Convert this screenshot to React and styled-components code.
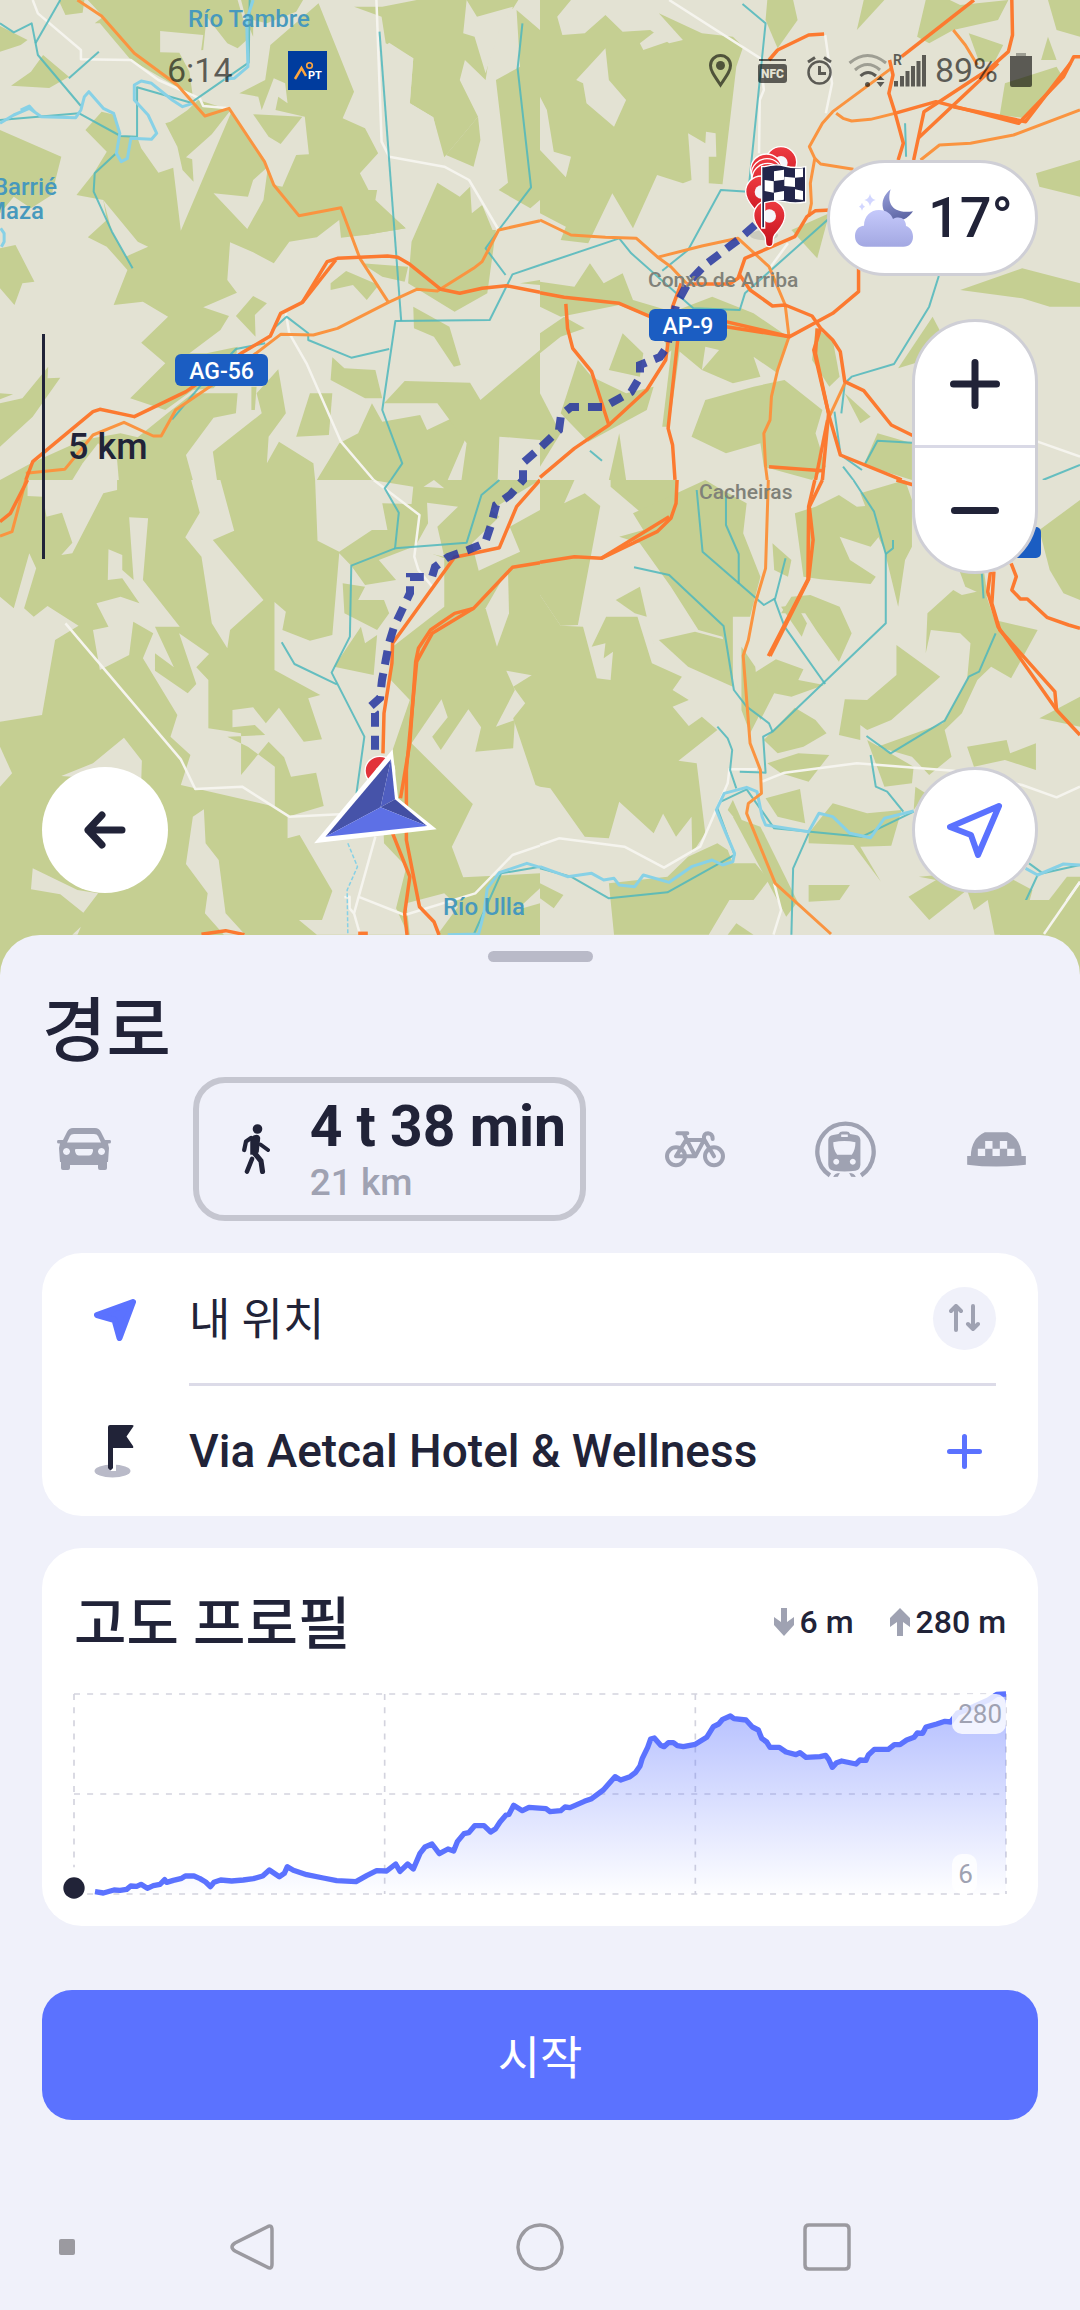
import React from 'react';
import styled, { createGlobalStyle, css } from 'styled-components';

const INK = '#212338';
const MUTED = '#9fa2b2';
const ACCENT = '#5b72ff';
const SURFACE = '#f0f1fa';

const GlobalStyle = createGlobalStyle`
  * {
    box-sizing: border-box;
  }

  body {
    margin: 0;
    background: ${SURFACE};
    color: ${INK};
    font-family: Roboto, 'Noto Sans CJK KR', sans-serif;
  }

  button {
    padding: 0;
    border: none;
    background: none;
    color: inherit;
    font: inherit;
    cursor: pointer;
  }

  svg {
    display: block;
  }
`;

const Screen = styled.div`
  display: flex;
  flex-direction: column;
  min-height: 100vh;
`;

/* ---------- map ---------- */

const MapArea = styled.section`
  position: relative;
  display: flex;
  flex: 1 0 auto;
  flex-direction: column;
  min-height: 960px;
  overflow: hidden;
`;

const MapCanvas = styled.svg`
  position: absolute;
  inset: 0;
  width: 100%;
  height: 100%;
`;

const StatusBar = styled.header`
  position: relative;
  display: flex;
  align-items: center;
  justify-content: space-between;
  height: 140px;
  padding: 0 48px 0 167px;
  font-size: 34px;
  line-height: 40px;
  color: rgba(0, 0, 0, 0.6);
`;

const StatusGroup = styled.div`
  display: flex;
  align-items: center;
  gap: ${({ $gap }) => $gap}px;
`;

const AppBadge = styled.svg`
  width: 39px;
  height: 39px;
  background: #003c9e;
`;

const MapOverlay = styled.div`
  position: relative;
  display: flex;
  flex: 1;
  justify-content: space-between;
  padding: 20px 42px 82px;
`;

const OverlayColumn = styled.div`
  display: flex;
  flex-direction: column;
  align-items: ${({ $align }) => $align};
  justify-content: space-between;
`;

const Controls = styled.div`
  display: flex;
  flex-direction: column;
  align-items: flex-end;
  gap: 43px;
`;

const WeatherPill = styled.button`
  display: flex;
  align-items: center;
  gap: 14px;
  height: 116px;
  padding: 0 22px 0 24px;
  border: 3px solid #cfcfd6;
  border-radius: 58px;
  background: #fff;
  font-size: 56px;
  font-weight: 500;
  line-height: 64px;
`;

const ZoomControl = styled.div`
  width: 126px;
  border: 3px solid #cfcfd6;
  border-radius: 63px;
  background: #fff;
`;

const ZoomButton = styled.button`
  display: flex;
  align-items: center;
  justify-content: center;
  width: 100%;
  height: 123px;

  & + & {
    height: 126px;
    border-top: 3px solid #d9d9e6;
  }
`;

const RoundButton = styled.button`
  display: flex;
  align-items: center;
  justify-content: center;
  width: 126px;
  height: 126px;
  border-radius: 50%;
  background: #fff;
  ${({ $outlined }) =>
    $outlined &&
    css`
      border: 3px solid #cfcfd6;
    `}
`;

const ScaleBar = styled.div`
  display: flex;
  align-items: center;
  height: 225px;
  margin-top: 174px;
  padding-left: 23px;
  border-left: 3px solid ${INK};
  font-size: 36px;
  font-weight: 500;
`;

/* ---------- sheet ---------- */

const Sheet = styled.main`
  position: relative;
  display: flex;
  flex-direction: column;
  margin-top: -40px;
  padding: 16px 42px 0;
  border-radius: 40px 40px 0 0;
  background: ${SURFACE};
`;

const Handle = styled.div`
  width: 105px;
  height: 11px;
  margin: 0 auto;
  border-radius: 6px;
  background: #b9bac8;
`;

const Title = styled.h1`
  margin: 25px 0 0;
  font-size: 70px;
  font-weight: 500;
  line-height: 90px;
`;

const ModeRow = styled.div`
  display: flex;
  align-items: center;
  justify-content: space-between;
`;

const ModeButton = styled.button`
  display: flex;
  align-items: center;
  justify-content: center;
  width: 84px;
  height: 84px;
  color: ${MUTED};
`;

const ActiveMode = styled.button`
  display: flex;
  align-items: center;
  gap: 40px;
  width: 393px;
  height: 144px;
  padding-left: 43px;
  border: 6px solid #c5c6d0;
  border-radius: 32px;
  text-align: left;
  white-space: nowrap;
`;

const ModeText = styled.span`
  padding-top: 4px;
`;

const Duration = styled.span`
  display: block;
  font-size: 57px;
  font-weight: 700;
  line-height: 64px;
`;

const Distance = styled.span`
  display: block;
  font-size: 37px;
  font-weight: 500;
  line-height: 48px;
  color: ${MUTED};
`;

const Card = styled.section`
  margin-top: 32px;
  padding: ${({ $padding }) => $padding};
  border-radius: 40px;
  background: #fff;
`;

const Waypoint = styled.div`
  display: grid;
  grid-template-columns: 95px 1fr;
  align-items: center;
`;

const WaypointBody = styled.div`
  display: flex;
  align-items: center;
  justify-content: space-between;
  height: ${({ $divided }) => ($divided ? 133 : 130)}px;
  border-bottom: ${({ $divided }) => ($divided ? '3px solid #dcdbe8' : 'none')};
`;

const WaypointName = styled.span`
  padding-top: ${({ $strong }) => ($strong ? 0 : 6)}px;
  font-size: ${({ $strong }) => ($strong ? 46 : 45)}px;
  font-weight: ${({ $strong }) => ($strong ? 500 : 400)};
  line-height: 56px;
`;

const RowAction = styled.button`
  display: flex;
  align-items: center;
  justify-content: center;
  width: 63px;
  height: 63px;
  border-radius: 50%;
  background: ${({ $filled }) => ($filled ? SURFACE : 'transparent')};
  color: ${({ $filled }) => ($filled ? MUTED : ACCENT)};
`;

const ProfileHeader = styled.div`
  display: flex;
  align-items: center;
  justify-content: space-between;
  height: 84px;
  margin-bottom: 30px;
`;

const ProfileTitle = styled.h2`
  margin: 0;
  padding-top: 6px;
  font-size: 57px;
  font-weight: 500;
  line-height: 78px;
`;

const Stats = styled.div`
  display: flex;
  gap: 36px;
`;

const Stat = styled.span`
  display: flex;
  align-items: center;
  gap: 6px;
  font-size: 32px;
  font-weight: 500;
  line-height: 40px;
`;

const ChartBox = styled.div`
  position: relative;
`;

const ChartSvg = styled.svg`
  width: 100%;
  height: auto;
  overflow: visible;
`;

const ChartLabels = styled.div`
  position: absolute;
  inset: 0 0 0 auto;
  display: flex;
  flex-direction: column;
  align-items: flex-start;
  justify-content: space-between;
`;

const ChartLabel = styled.span`
  padding: 0 4px 0 6px;
  border-radius: 10px;
  background: rgba(255, 255, 255, 0.8);
  font-size: 26px;
  line-height: 40px;
  color: ${MUTED};
`;

const StartButton = styled.button`
  height: 130px;
  margin-top: 64px;
  padding-top: 6px;
  border-radius: 30px;
  background: ${ACCENT};
  color: #fff;
  font-size: 46px;
  line-height: 56px;
`;

const NavBar = styled.nav`
  display: grid;
  grid-template-columns: 109px 1fr 1fr 1fr 109px;
  height: 190px;
  padding-top: 64px;
  background: ${SURFACE};
`;

const NavButton = styled.button`
  display: flex;
  align-items: center;
  justify-content: ${({ $end }) => ($end ? 'flex-end' : 'center')};
  height: 126px;
  padding-right: ${({ $end }) => ($end ? 34 : 0)}px;
`;

/* ---------- map data: four quadrants, each 1568 x 1440 units ---------- */

const LAND = '#e3e2d3';
const FOREST = '#c5cf92';

const quadrants = [
  {
    x: 0,
    y: 0,
    base: LAND,
    patches: [
      [FOREST, '170,0 245,0 240,38 190,45'],
      [FOREST, '0,78 80,120 60,135 0,155'],
      [FOREST, '125,165 200,230 143,264 32,257 90,215'],
      [FOREST, '255,0 690,0 722,115 690,145 660,130 600,50 590,150 520,157 550,215 560,290 480,240 380,180 290,70 275,70 300,50'],
      [LAND, '465,93 590,105 583,160 465,157'],
      [FOREST, '700,0 740,0 880,0 860,35 775,70 735,60 735,110 715,60'],
      [FOREST, '248,390 295,335 335,345 350,408 398,410 410,445 460,518 503,503 525,692 672,335 768,485 795,555 868,647 990,623 1022,572 1030,645 1085,600 1178,685 1060,705 990,713 985,660 920,712 840,725 795,790 735,757 668,727 660,840 688,878 590,922 665,948 640,990 550,1060 600,1060 690,1040 680,1100 620,1165 560,1170 480,1230 378,1195 480,1090 410,1028 488,950 415,905 330,915 370,810 310,740 255,712 310,660 300,600 222,585 272,520 310,455'],
      [FOREST, '480,370 495,365 545,330 575,300 670,330 615,403 540,472 558,478 562,545 530,510 515,440'],
      [LAND, '620,580 720,590 735,540 778,500 765,600 718,687'],
      [LAND, '365,770 430,740 400,725 300,600 325,695'],
      [FOREST, '785,135 880,50 925,10 1028,275 995,355 1060,385 1098,460 1045,520 1070,570 1095,570 1090,600 1178,685 1060,705 985,640 870,647 795,555 820,560 860,465 897,463 885,350 800,330 808,290 835,310 828,250 795,235 760,330 750,290 695,280 770,240'],
      [FOREST, '735,343 878,350 815,432 780,410'],
      [FOREST, '0,390 178,470 150,585 90,625 40,590 0,640'],
      [FOREST, '0,745 45,735 100,845 65,850 42,915 0,865'],
      [FOREST, '0,1210 65,1195 140,1100 138,1135 175,1133 95,1250 0,1340'],
      [FOREST, '0,1180 38,1183 0,1198'],
      [FOREST, '480,1245 560,1180 690,1180 685,1240 620,1253 540,1365 560,1440 0,1440 90,1390 240,1320 350,1300 400,1312'],
      [LAND, '240,1390 285,1330 340,1380 345,1440 210,1440'],
      [FOREST, '1028,20 1108,50 1120,130 1200,175 1190,310 1258,352 1290,472 1388,350 1335,240 1350,180 1410,240 1440,40 1490,25 1505,0 1210,0 1110,20'],
      [LAND, '1030,50 1092,60 1100,400 1130,470 1290,500 1258,352 1190,310 1200,175 1130,128 1110,145 1095,50'],
      [FOREST, '1500,30 1568,90 1568,600 1540,625 1448,570 1475,548 1440,240 1510,200'],
      [LAND, '1355,0 1385,50 1490,20 1450,90 1410,220 1378,110 1345,100'],
      [FOREST, '1295,465 1388,350 1395,420 1375,500'],
      [FOREST, '1270,548 1335,590 1365,560 1370,640 1400,615 1430,690 1440,690 1415,880 1320,935 1185,850 1195,725'],
      [FOREST, '1050,790 1185,800 1175,845 1110,830'],
      [FOREST, '960,850 1005,813 1100,855 1065,900 1025,855 960,870'],
      [FOREST, '1200,920 1305,980 1338,1095 1318,1100 1260,1010 1202,985'],
      [FOREST, '735,888 775,910 740,945 742,1010 685,948'],
      [FOREST, '745,1180 808,1108 830,1240 780,1310 775,1390 810,1325 910,1390 915,1440 630,1440 618,1355 760,1240'],
      [FOREST, '730,1160 745,1160 740,1230 730,1230'],
      [FOREST, '900,1180 965,1180 955,1305 860,1310'],
      [FOREST, '965,1072 1000,1105 1090,1110 1110,1195 1060,1195 960,1140'],
      [FOREST, '1080,1210 1110,1265 1220,1245 1240,1290 1358,1232 1350,1320 1300,1440 920,1440 985,1330 1040,1300'],
      [FOREST, '1175,1143 1365,1148 1395,1200 1510,1100 1568,1050 1568,1320 1450,1310 1445,1440 1340,1440 1355,1330 1270,1210 1115,1210'],
      [FOREST, '1510,850 1568,840 1568,855'],
    ],
    white: [
      '95,0 110,40 235,150 235,178 380,180 460,240 580,295 590,318 665,325',
      '1093,0 1108,425 1130,470 1290,500 1362,540 1448,690',
      '830,940 840,1000 890,1090 990,1325 1085,1440',
    ],
    teal: [
      '0,70 40,97 92,70 110,165 235,318',
      '175,0 103,130',
      '287,155 200,235',
      '0,360 230,340 350,408 398,410 398,262 555,308 722,188 725,0',
      '335,462 275,520 272,575 325,695 385,805',
      '1102,95 1165,963',
      '1517,70 1503,205 1542,562 1448,690 1410,745 1468,825',
      '1568,795 1488,823 1422,960 1148,963 1110,1230 1168,1390 1135,1440',
      '790,990 832,950 895,1000 895,1020 1020,1073 1130,1047',
      '770,1030 685,1047 580,1160 500,1258',
    ],
    river: [
      '0,370 40,345 85,325 120,350 220,353 235,330 245,290 258,275 300,325 330,340 348,400 338,460 352,485 370,475 380,415 440,418 455,400 430,345 390,300 390,255 410,243 440,250 500,300 530,320 560,310',
      '735,0 716,60 720,200 680,235 650,238',
      '60,330 85,318 100,335',
      '2,685 12,700 12,725 4,740',
    ],
    minor: [
      '225,0 295,48 390,160 515,255 595,348 665,325 768,485 795,555 868,647 990,623 1045,775 1128,907',
      '75,1420 188,1408 270,1305 360,1267 445,1308 468,1308 510,1230 680,1110 815,1003 910,1005 980,985 1128,907 1210,868 1270,873 1375,805 1400,785 1448,690 1568,662',
    ],
    major: [
      '75,1440 95,1385 270,1235 290,1228 390,1250 540,1175 700,1060 785,1008 815,940 878,907 950,785 980,775 1125,768 1155,772 1190,793 1280,868 1335,880 1400,865 1470,857 1568,877',
      '878,907 975,780',
    ],
  },
  {
    x: 540,
    y: 0,
    base: LAND,
    patches: [
      [FOREST, '0,0 90,0 50,50 65,105 130,100 190,45 240,95 320,90 375,130 415,120 345,40 470,100 560,110 590,140 570,200 530,553 490,550 490,470 512,470 510,400 482,395 480,430 430,400 440,540 415,550 340,525 270,685 210,580 140,730 60,720 75,680 0,640 0,450 75,532 90,470 40,455 20,330 0,290'],
      [LAND, '105,240 190,145 200,240 250,300 215,380 135,310 125,250'],
      [LAND, '290,130 340,90 370,125 300,150'],
      [FOREST, '660,0 735,0 748,60 690,145 655,60'],
      [FOREST, '940,0 1000,0 920,90'],
      [FOREST, '1120,0 1190,0 1220,15 1360,0 1330,60 1200,90 1130,130 1095,110'],
      [FOREST, '1245,100 1345,135 1320,185 1275,185'],
      [FOREST, '1475,0 1568,0 1568,110 1500,90'],
      [FOREST, '1350,250 1500,200 1520,235 1410,355 1335,345'],
      [FOREST, '1475,110 1500,180 1455,180'],
      [FOREST, '1440,520 1568,480 1568,590 1450,560'],
      [FOREST, '1220,870 1400,805 1568,850 1568,920 1480,920 1400,895'],
      [FOREST, '1140,950 1165,1000 1150,1070 1040,1105'],
      [FOREST, '730,690 840,640 805,775'],
      [FOREST, '0,845 100,860 145,790 185,850 240,820 270,900 400,940 440,1010 370,1060 350,960 300,945 230,915 60,950 0,920'],
      [FOREST, '0,1000 70,950 130,985 60,1010 0,1060'],
      [FOREST, '240,1000 300,1060 290,1130 200,1110'],
      [FOREST, '110,1080 150,1130 250,1180 330,1160 310,1230 140,1325 60,1240'],
      [FOREST, '400,930 500,890 620,940 720,1010 690,1120 620,1070 640,1130 560,1150 470,1110 520,1050 480,1040 470,1110 400,1050'],
      [FOREST, '385,1020 410,1020 375,1280 355,1280'],
      [FOREST, '480,1200 620,1160 710,1140 820,1230 800,1300 830,1400 790,1440 650,1400 640,1330 540,1360 440,1310'],
      [FOREST, '980,1300 1080,1330 1080,1440 940,1395'],
      [FOREST, '885,1180 960,1250 930,1270'],
      [FOREST, '800,985 850,1020 870,1130 840,1160 790,1080'],
      [FOREST, '0,1180 60,1300 0,1400'],
      [FOREST, '230,1300 250,1440 200,1440'],
    ],
    white: [
      '375,0 640,175 650,270 638,300 636,460',
      '828,105 848,250 830,340',
      '720,730 670,800',
      '1445,1325 1568,1370',
    ],
    teal: [
      '588,12 655,70 605,575 525,570 430,750 355,812',
      '0,795 230,715 265,760 445,925 580,930 595,880 840,655',
      '1158,828 1130,920 1028,1092 905,1130 885,1150 875,1240',
      '855,1235 873,1365 935,1410',
      '1080,1328 980,1322 942,1395',
      '1568,1395 1460,1440',
      '880,1400 910,1440',
      '1060,370 1063,470',
      '145,1352 180,1382',
    ],
    river: [],
    minor: [
      '0,660 90,705 190,712 280,715 340,770 380,800 425,850',
      '340,772 470,738 575,715 665,800 712,915 723,1010 690,1110 672,1190 668,1260 650,1300 655,1400 660,1440',
      '1020,205 850,335 820,370 782,440 798,475 785,550 788,610 780,650',
      '860,340 880,355 905,363 960,358 1030,340',
      '1105,480 1160,435 1250,430 1375,405 1568,330',
      '798,475 815,492 910,508',
      '1200,90 1235,135 1270,195',
      '885,1150 840,1250',
    ],
    major: [
      '0,878 70,892 230,910 320,950 540,965 725,1010 850,940 925,875 925,800',
      '540,980 725,1010',
      '580,825 610,870 675,918 712,915 790,948 815,985 850,1020 872,1055 885,1145 940,1172 1020,1275 1085,1308',
      '815,985 795,1050 840,1250 872,1365 1050,1440',
      '805,985 800,1060 838,1240 820,1440',
      '835,1260 800,1440',
      '425,852 550,852 575,835 595,775 740,710 775,650 800,632 845,630',
      '410,850 385,920 365,1080 310,1170 200,1275 100,1345 0,1432',
      '400,1020 372,1285 385,1335 392,1440',
      '75,912 80,985 95,1045 150,1115 200,1275',
      '1260,0 1050,170',
      '1370,0 1372,105 1360,155 1300,210 1115,335 1085,480',
      '1330,190 1098,415',
      '1015,180 1025,225 1013,280 1030,335 1055,430 1040,480',
      '1030,340 1150,305 1390,370 1520,230 1550,170 1568,170',
      '1200,320 1410,365 1540,190',
      '665,180 690,150 780,105 825,102',
      '665,1400 820,1412',
    ],
  },
  {
    x: 0,
    y: 480,
    base: FOREST,
    patches: [
      [LAND, '80,0 340,0 340,30 300,40 210,220 178,225 210,188 180,98 135,110 125,50 80,48'],
      [LAND, '555,0 640,0 680,152 618,180 765,360 668,450 660,505 615,430 585,230 538,172 580,98'],
      [LAND, '915,0 1080,0 1200,20 1195,72 1110,70 1125,150 1080,150 985,215 922,182'],
      [LAND, '1230,20 1260,0 1290,25'],
      [LAND, '315,208 355,225 355,270 388,300 375,112 430,115 415,300 522,440 450,440 505,562 450,520 450,572 545,640 570,612 520,460 607,522 570,562 605,600 605,745 700,760 700,885 780,785 825,832 845,890 918,878 940,978 835,1010 835,1075 870,1065 965,1233 935,1320 868,1320 920,1364 1185,1364 1150,1285 1180,1160 1115,1090 1110,940 1140,810 1190,660 1130,595 1140,500 1290,380 1290,235 1200,200 1100,240 1150,300 1060,315 1020,257 985,220 965,465 900,482 820,450 830,395 797,366 797,570 930,645 895,655 935,778 882,785 810,683 772,730 735,682 675,690 675,742 740,735 770,765 660,770 720,800 798,860 798,980 525,915 553,825 495,770 515,705 415,535 445,460 387,425 375,525 290,570 270,450 315,440 280,370 350,350 405,370 355,295 313,300'],
      [FOREST, '995,310 1060,320 1040,360 1115,360 1130,400 1095,450 1000,400'],
      [FOREST, '1048,440 1060,490 1095,465 1085,585 970,560'],
      [LAND, '0,350 40,385 85,220 105,265 70,385 98,410 138,378 228,437 160,480 122,705 0,725'],
      [LAND, '178,888 270,850 360,773 412,842 410,905'],
      [LAND, '95,1165 225,1230 285,1240 242,1298 175,1243 90,1228'],
      [LAND, '560,1010 592,988 597,1090 635,1140 655,1300 712,1364 650,1364 595,1300 603,1240 540,1152'],
      [LAND, '1195,790 1282,658 1300,712 1255,770 1280,810 1360,688 1397,742 1380,815 1490,805 1495,720 1440,740 1495,630 1470,572 1568,590 1568,1180 1345,1192 1312,1100 1373,972'],
      [FOREST, '1490,620 1568,570 1568,920 1555,915 1490,715 1525,670'],
      [LAND, '1240,68 1330,80 1270,140 1290,230 1200,210 1243,130'],
      [LAND, '1370,190 1450,110 1425,90 1568,0 1568,90 1480,140 1510,215 1390,272'],
      [LAND, '1410,385 1475,268 1478,400 1443,500'],
      [LAND, '0,800 35,880 0,920'],
      [LAND, '1180,1270 1290,1240 1330,1280 1270,1364 1190,1364'],
      [LAND, '1500,1290 1568,1225 1568,1270'],
      [LAND, '210,1364 235,1340 225,1364'],
    ],
    white: [
      '190,430 525,838 567,927 703,920 840,1010 1000,1002',
      '1085,0 1218,105 1203,230 1215,270 1255,320',
      '1090,1070 1028,1300 1045,1362',
      '1000,1252 1015,1250 1015,1285 1028,1300',
      '1040,1250 1175,1305 1380,1240 1488,1125 1568,1097',
    ],
    teal: [
      '1135,0 1117,25 1158,98 1147,205 1355,188 1398,45 1450,0',
      '1147,205 1020,257 1016,470 963,578 1058,770 1035,940',
      '818,487 855,552 978,613',
      '1568,1160 1455,1180 1375,1365',
    ],
    river: [
      '1568,1162 1530,1150 1450,1178 1415,1225 1405,1300 1390,1362 1300,1364',
    ],
    stream: ['1010,1090 1038,1160 1008,1230 1010,1362'],
    minor: ['75,0 35,155 0,168'],
    major: [
      '1568,248 1488,262 1375,385 1320,400 1250,450 1215,505 1207,545 1190,790 1163,955',
      '1375,385 1255,460 1210,545 1180,870 1180,1080 1218,1280 1260,1325 1275,1365',
      '1140,1060 1190,1190 1175,1300 1182,1365',
      '1568,0 1500,80 1450,203 1320,232 1140,490 1138,550 1115,700 1112,820',
      '80,0 30,100 0,125',
      '585,1363 655,1352 710,1364',
      '1040,1360 1068,1360',
    ],
  },
  {
    x: 540,
    y: 480,
    base: LAND,
    patches: [
      [FOREST, '0,0 100,0 70,70 130,40 175,78 110,435 60,437 0,345'],
      [FOREST, '205,0 400,0 385,95 290,95 205,20'],
      [FOREST, '230,170 300,150 270,100 480,0 520,25 600,70 590,160 640,290 610,410 560,410 560,600 530,470 460,450 380,320 290,190'],
      [FOREST, '220,360 290,320 310,410 275,400'],
      [FOREST, '345,480 450,455 540,480 560,620 430,560'],
      [FOREST, '0,345 60,437 125,440 165,595 205,600 212,515 185,535 190,490 150,500 192,410 283,410 325,550 412,590 385,630 432,660 385,680 432,738 470,710 515,750 402,842 455,850 480,1060 442,1120 440,1010 395,1070 330,950 358,1000 330,1060 230,965 200,1075 130,1070 30,925 0,920'],
      [LAND, '320,460 310,440 335,500'],
      [FOREST, '740,100 800,80 868,45 920,80 1037,70 1000,150 960,200 870,170 900,240 975,290 960,312 815,298 765,290'],
      [FOREST, '930,40 1060,0 1080,60 1080,200 1060,240 1040,380 1000,210 960,120'],
      [FOREST, '675,190 730,240 720,290 680,270'],
      [FOREST, '730,350 785,345 870,380 905,460 868,545 805,455 770,400 700,400'],
      [FOREST, '700,380 745,375 775,430 760,470'],
      [FOREST, '1125,400 1200,330 1225,345 1290,330 1320,420 1445,450 1368,595 1310,560 1270,600 1225,700 1175,750 1195,830 1130,885 1080,830 980,800 1170,730 1240,600 1250,490 1220,460 1135,450 1120,520'],
      [FOREST, '1035,495 1162,590 1020,720 950,750 930,735 930,780 868,765 885,658 950,660 1035,585'],
      [FOREST, '590,600 685,538 765,568 750,600 825,615 730,650 680,640 640,720'],
      [FOREST, '585,500 625,560 640,700 610,760 585,690'],
      [FOREST, '650,780 740,683 800,720 832,760 765,800 690,820'],
      [FOREST, '660,850 750,820 840,825 780,905 700,880'],
      [FOREST, '655,955 755,927 770,1030 690,1010'],
      [FOREST, '850,970 950,1000 1050,990 1020,1097 930,1100 990,1205 910,1095 780,1090 780,1060'],
      [FOREST, '640,1040 748,1265 715,1310 560,1010'],
      [FOREST, '950,780 1085,860 1080,910 1000,920'],
      [FOREST, '1090,920 1120,940 1085,990'],
      [FOREST, '780,1215 900,1215 870,1260 780,1265'],
      [FOREST, '1070,1250 1150,1200 1100,1190 1320,1170 1430,1230 1395,1364 1320,1364 1300,1260 1260,1290 1240,1230 1130,1320'],
      [FOREST, '1400,1364 1530,1190 1568,1190 1568,1364'],
      [FOREST, '1240,800 1355,780 1365,820 1440,790 1440,870 1350,840 1260,860'],
      [FOREST, '1450,150 1568,60 1568,360 1520,340 1480,270'],
      [FOREST, '1450,715 1568,650 1568,740'],
      [FOREST, '1210,250 1290,280 1300,350 1235,320'],
      [FOREST, '200,1210 370,1190 430,1130 515,1090 545,1110 560,1150 625,1150 665,1200 620,1260 550,1260 490,1364 215,1364'],
      [FOREST, '0,1210 68,1245 40,1285 0,1255'],
      [FOREST, '560,960 605,1065 545,990'],
      [FOREST, '545,1364 570,1330 620,1364'],
    ],
    white: [
      '0,1095 55,1075 245,1100 360,1163 465,1100 545,910 550,868 630,868',
      '645,905 710,878 920,850 1200,872 1400,915 1500,952 1568,920',
      '680,1210 700,1290 678,1364',
      '1460,1364 1568,1205',
    ],
    teal: [
      '455,30 472,215 650,375 683,355 713,235',
      '540,45 540,135 577,222 577,312',
      '680,355 710,440 828,612',
      '910,0 970,95 1004,222 1004,430 675,755 648,770 655,878 580,875',
      '1004,222 1025,205 1025,180',
      '273,262 375,285 533,438 563,630 600,680 665,730 675,755',
      '515,740 545,775 558,810 552,870 570,925',
      '1283,280 1288,355',
      '1323,460 1275,575 1245,590 1175,722 1018,820 948,768',
      '960,825 975,920 1008,935 1055,995',
      '0,1165 90,1190 200,1255 370,1237 565,1125 515,985',
      '525,965 600,928 680,1045 935,1070 1085,995',
      '780,1060 735,1165 730,1364',
      '1420,1150 1460,1180 1568,1155',
      '1445,1185 1380,1330 1375,1364',
    ],
    river: [
      '0,1160 80,1190 150,1180 185,1200 215,1195 230,1215 275,1220 300,1185 375,1207 440,1160 500,1140 530,1155 560,1145 565,1120 540,1060 512,990 535,940 600,922 630,935 645,1010 655,1035 780,1055 810,1000 850,1010 900,1060 960,1073 1000,1015 1085,993',
      '1410,1165 1445,1185 1520,1152 1568,1155',
    ],
    minor: [
      '663,0 655,265 625,370 605,480 590,527 610,790 640,870 643,940 605,970 600,1000 683,1210 845,1362',
    ],
    major: [
      '0,247 100,230 178,235 340,155 380,115 395,70 398,0',
      '178,235 375,110',
      '798,0 780,80 778,298 663,528',
      '820,0 782,80 793,180 780,298 668,528',
      '1308,275 1300,335 1330,440 1500,690 1568,765',
      '1318,275 1312,370 1335,450 1495,635 1500,690',
      '1368,250 1383,290 1370,330 1395,357 1415,357 1472,412 1535,435 1568,445',
      '1035,0 1085,15',
    ],
  },
];

const lineStyles = {
  white: { stroke: '#f5f4ee', strokeWidth: 2.5 },
  teal: { stroke: '#4fb8bd', strokeWidth: 2, opacity: 0.85 },
  river: { stroke: '#87d1e6', strokeWidth: 3 },
  stream: { stroke: '#87d1e6', strokeWidth: 1.5, strokeDasharray: '4 2' },
  minor: { stroke: '#fa9440', strokeWidth: 3 },
  major: { stroke: '#fc7a30', strokeWidth: 3.5 },
};

const route =
  '755,225 738,240 705,265 688,283 676,305 667,347 660,357 640,365 640,377 631,392 604,407 571,407 561,415 559,430 540,448 523,463 523,480 510,495 496,505 491,525 485,543 468,550 448,557 435,567 432,577 410,577 410,593 394,627 389,643 382,680 380,698 370,707 375,713 375,753';

const Quadrant = ({ data }) => (
  <g transform={`translate(${data.x} ${data.y}) scale(0.34439 0.33333)`}>
    <rect width="1572" height="1443" fill={data.base} />
    {data.patches.map(([fill, points], i) => (
      <polygon key={i} points={points} fill={fill} />
    ))}
    {Object.keys(lineStyles).map((kind) =>
      (data[kind] || []).map((points, i) => (
        <polyline
          key={kind + i}
          points={points}
          fill="none"
          strokeLinejoin="round"
          vectorEffect="non-scaling-stroke"
          {...lineStyles[kind]}
        />
      ))
    )}
  </g>
);

const RoadShield = ({ x, y, width, label }) => (
  <g>
    <rect x={x} y={y} width={width} height="32" rx="6" fill="#1b5dc2" />
    <text x={x + width / 2} y={y + 25} textAnchor="middle" fontSize="23" fontWeight="500" fill="#fff">
      {label}
    </text>
  </g>
);

const Pin = ({ x, y }) => (
  <g transform={`translate(${x} ${y})`}>
    <path
      d="M0 -48 a47 47 0 0 1 47 47 c0 26-20 42-31 58 c-7 10-3 18-5 24 a11 11 0 1 1-22 0 c-2-6 2-14-5-24 c-11-16-31-32-31-58 a47 47 0 0 1 47-47z"
      fill="url(#pinFill)"
      stroke="#fff"
      strokeWidth="4"
    />
    <circle r="20" fill="#f5f5fa" />
  </g>
);

const RouteMap = () => (
  <MapCanvas viewBox="0 0 1080 975" preserveAspectRatio="xMidYMin slice" aria-label="Map">
    <defs>
      <linearGradient id="pinFill" x1="0" y1="0" x2="0" y2="1">
        <stop offset="0" stopColor="#ee3b42" />
        <stop offset="1" stopColor="#c4101c" />
      </linearGradient>
    </defs>
    {quadrants.map((q, i) => (
      <Quadrant key={i} data={q} />
    ))}
    <path d="M1000 900 H1080 V975 H1000z M0 934 H60 V975 H0z" fill={FOREST} />
    <path d="M1044 934 L1080 882" stroke="#f5f4ee" strokeWidth="2.5" />
    <polyline points={route} fill="none" stroke="#2636a0" strokeWidth="8" strokeDasharray="14 9" opacity="0.85" />
    <g fontWeight="500" fontSize="24" fill="#4799bd">
      <text x="188" y="27">Río Tambre</text>
      <text x="57" y="195" textAnchor="end">Barrié</text>
      <text x="44" y="219" textAnchor="end">Maza</text>
      <text x="443" y="915">Río Ulla</text>
    </g>
    <g fontSize="21" fill="#808179" fontWeight="500">
      <text x="648" y="287">Conxo de Arriba</text>
      <text x="699" y="499">Cacheiras</text>
    </g>
    <RoadShield x={175} y={354} width={93} label="AG-56" />
    <RoadShield x={649} y={309} width={78} label="AP-9" />
    <rect x="1000" y="527" width="41" height="31" rx="5" fill="#1b5dc2" />

    <g transform="translate(690 40) scale(0.33333)">
      <ellipse cx="222" cy="586" rx="42" ry="15" fill="#000" opacity="0.1" />
      <Pin x={273} y={368} />
      <Pin x={229} y={390} />
      <Pin x={231} y={404} />
      <Pin x={233} y={418} />
      <Pin x={214} y={456} />
      <Pin x={238} y={528} />
      <path
        d="M215 380 h9 q32-10 60-2 q32 8 63 2 v106 q-35 6-63-1 q-30-6-60 3 v76 h-9z"
        fill="#22254a"
        stroke="#fff"
        strokeWidth="4"
      />
      <path
        d="M252 394 l30-5 v30 l-30 4z M315 386 l24-1 v26 l-24 2z M224 420 l27 4 v34 l-27-5z M283 410 l32 3 v28 l-32 -3z M252 458 l30-5 v26 l-30 4z M315 448 l24 5 v27 l-24-3z"
        fill="#fff"
      />
    </g>

    <g transform="translate(0 480) scale(0.34439 0.33333)">
      <circle cx="1103" cy="872" r="43" fill="#e2323a" stroke="#fff" strokeWidth="4" />
      <circle cx="1110" cy="880" r="22" fill="#f5f5fa" />
      <path d="M1140 808 L1156 955 L1268 1048 L912 1090z" fill="#fff" />
      <path d="M1135 838 L1105 982 L945 1070z" fill="#4653a9" />
      <path d="M1135 838 L1147 958 L1105 982z" fill="#4f5ec0" />
      <path d="M1147 958 L1240 1038 L1105 982z" fill="#434fa3" />
      <path d="M945 1070 L1105 982 L1240 1038z" fill="#5d70e6" />
    </g>
  </MapCanvas>
);

/* ---------- icons ---------- */

const PlusIcon = ({ size, stroke }) => (
  <svg width={size} height={size} viewBox={`0 0 ${size} ${size}`} aria-hidden="true">
    <path
      d={`M${size / 2} ${stroke / 2} V${size - stroke / 2} M${stroke / 2} ${size / 2} H${size - stroke / 2}`}
      stroke="currentColor"
      strokeWidth={stroke}
      strokeLinecap="round"
    />
  </svg>
);

const MinusIcon = () => (
  <svg width="48" height="8" viewBox="0 0 48 8" aria-hidden="true">
    <rect y="1" width="48" height="7" rx="3.5" fill="currentColor" />
  </svg>
);

const WeatherIcon = () => (
  <svg width="60" height="60" viewBox="0 0 180 180" aria-hidden="true">
    <defs>
      <linearGradient id="moon" x1="0" y1="0" x2="0.4" y2="1">
        <stop offset="0" stopColor="#9aa2dc" />
        <stop offset="1" stopColor="#6068a6" />
      </linearGradient>
      <linearGradient id="cloud" x1="0" y1="0" x2="0" y2="1">
        <stop offset="0" stopColor="#c5c9fb" />
        <stop offset="1" stopColor="#a3a8e2" />
      </linearGradient>
    </defs>
    <path d="M110 4 C98 40 110 80 177 70 C162 92 140 104 118 94 C90 88 66 40 110 4z" fill="url(#moon)" />
    <path d="M48 17 q3 16 17 19 q-14 3-17 19 q-3-16-17-19 q14-3 17-19z M24 44 q2 10 9 12 q-7 2-9 12 q-2-10-9-12 q7-2 9-12z" fill="#d2d6ff" />
    <path
      d="M36 176 C12 176 3 160 3 144 C3 126 14 114 30 113 C30 84 50 66 75 66 C98 66 112 78 117 93 C138 82 156 94 156 114 C168 118 177 130 177 146 C177 164 166 176 148 176z"
      fill="url(#cloud)"
    />
  </svg>
);

const CarIcon = () => (
  <svg width="54" height="42" viewBox="0 0 54 42" aria-hidden="true">
    <path
      fill="currentColor"
      fillRule="evenodd"
      d="M1 12 H6 L10 4 Q12 0 16 0 H38 Q42 0 44 4 L48 12 H53 Q54 12 54 14 Q54 15.500 52 15.500 H51 L52 20 L51 34 H50 V40 Q50 42 48 42 H43 Q41 42 41 40 V37 H13 V40 Q13 42 11 42 H6 Q4 42 4 40 V34 H3 L2 20 L3 15.500 H2 Q0 15.500 0 14 Q0 12 1 12z M17 6 Q14 6 13 8 L10 14.500 H44 L41 8 Q40 6 37 6z M9.500 20 a3.500 3.500 0 1 0 .01 0z M44.500 20 a3.500 3.500 0 1 0 .01 0z M19 21 H35 Q36.500 21 36 23 Q35 27.500 32 27.500 H22 Q19 27.500 18 23 Q17.500 21 19 21z"
    />
  </svg>
);

const WalkIcon = () => (
  <svg width="28" height="50" viewBox="0 0 28 50" aria-hidden="true">
    <circle cx="15.500" cy="5" r="4.800" fill="currentColor" />
    <path d="M9 14 Q16 9 17.500 14 L16 28 L9 30z" fill="currentColor" stroke="currentColor" strokeWidth="1.500" strokeLinejoin="round" />
    <g fill="none" stroke="currentColor" strokeLinecap="round" strokeLinejoin="round">
      <path d="M9 14 L4 17.500 L2.200 26" strokeWidth="4.200" />
      <path d="M18.500 20.500 L26 26" strokeWidth="4" />
      <path d="M12 28.500 L19 37 L20.500 47.500" strokeWidth="5.200" />
      <path d="M10 35 L5 47.500" strokeWidth="4.600" />
    </g>
  </svg>
);

const BikeIcon = () => (
  <svg width="60" height="37" viewBox="317 214 180 111" fill="none" stroke="currentColor" strokeWidth="12" strokeLinecap="round" strokeLinejoin="round" aria-hidden="true">
    <circle cx="350" cy="290" r="27" />
    <circle cx="464" cy="290" r="27" />
    <path d="M350 290 L380 241 H434 L408 290z M374 224 L406 286 M354 221 H384 M464 290 L434 238 Q432 221 446 221 Q460 222 460 238" />
  </svg>
);

const MetroIcon = () => (
  <svg width="61" height="57" viewBox="767 183 184 172" aria-hidden="true">
    <path d="M812 347 A85 85 0 1 1 906 347" fill="none" stroke="currentColor" strokeWidth="13" />
    <path
      fill="currentColor"
      fillRule="evenodd"
      d="M807 240 Q808 226 822 225 L838 222 Q842 215 850 215 H862 Q870 215 873 222 L890 225 Q903 227 904 240 V315 Q903 331 889 333 Q856 338 823 333 Q808 331 807 315z M822 247 Q822 270 834 285 H878 Q889 270 889 247 Q856 240 822 247z M831 297 a9 9 0 1 0 .1 0z M881 297 a9 9 0 1 0 .1 0z M846 224 h20 v7 h-20z"
    />
    <path d="M822 352 Q826 340 842 340 L836 351z M890 352 Q886 340 870 340 L876 351z" fill="currentColor" />
  </svg>
);

const TaxiIcon = () => (
  <svg width="59" height="35" viewBox="1218 216 176 105" aria-hidden="true">
    <path
      fill="currentColor"
      fillRule="evenodd"
      d="M1229 288 Q1230 236 1271 217 H1339 Q1380 236 1381 288 H1394 V314 Q1306 325 1218 314 V288z M1272 243 v23 h-22 v22 h22 v-22 h22 v22 h22 v-22 h22 v22 h22 v-22 h-22 v-23 h-22 v23 h-22 v-23z"
    />
  </svg>
);

const SwapIcon = () => (
  <svg width="31" height="28" viewBox="0 0 31 28" fill="none" stroke="currentColor" strokeWidth="4" strokeLinecap="round" strokeLinejoin="round" aria-hidden="true">
    <path d="M7 26 V3 M2 7 L7 2 L12 7 M24 2 V25 M19 20 L24 25 L29 20" />
  </svg>
);

const DestinationFlag = () => (
  <svg width="41" height="53" viewBox="0 0 41 53" aria-hidden="true">
    <ellipse cx="18.500" cy="46" rx="18" ry="6.500" fill="#b9bac8" />
    <path d="M17 46 h5 v-9 h-5z" fill="#fff" />
    <path d="M14 2 Q14 0 16 0 H38 Q40.500 0 39 2 L32.500 11.500 L39 21 Q40 23 38 23 H19 V43 Q16.500 47 14 43z" fill={INK} />
  </svg>
);

const AltitudeArrow = ({ down }) => (
  <svg width="20" height="28" viewBox="0 0 20 28" aria-hidden="true">
    <path d={down ? 'M7 0 H13 V14 L20 9 V17 L10 28 L0 17 V9 L7 14z' : 'M7 28 H13 V14 L20 19 V10 L10 0 L0 10 V19 L7 14z'} fill={MUTED} />
  </svg>
);

/* ---------- altitude chart: 2796 x 600 units, 3 per pixel ---------- */

const altitude =
  '63,593 88,597 120,588 138,589 158,586 170,576 188,577 201,571 220,583 238,575 258,571 272,557 278,565 298,559 323,553 334,546 360,546 378,554 395,564 409,578 420,565 440,558 473,561 508,558 538,554 566,546 586,528 616,548 631,538 640,518 658,529 698,542 748,552 788,560 846,563 878,545 908,530 938,531 965,510 978,532 1001,510 1018,525 1038,478 1053,459 1074,450 1096,479 1122,465 1139,471 1150,443 1170,419 1184,416 1202,395 1230,395 1250,414 1265,404 1278,384 1296,363 1305,361 1319,334 1345,350 1365,340 1416,344 1428,353 1460,350 1473,339 1488,341 1531,322 1553,314 1588,288 1623,248 1640,258 1668,248 1685,235 1698,216 1705,193 1721,160 1730,135 1741,132 1760,154 1770,158 1783,146 1798,146 1810,155 1828,158 1864,151 1898,130 1918,98 1934,90 1946,76 1969,66 1980,74 2016,78 2035,99 2053,108 2063,133 2078,144 2088,160 2116,160 2136,174 2166,182 2178,176 2196,190 2238,188 2255,184 2264,196 2275,220 2288,206 2303,201 2346,210 2358,198 2376,199 2383,183 2401,166 2443,166 2461,152 2478,152 2498,138 2520,130 2530,117 2546,118 2556,99 2588,90 2613,82 2630,84 2650,58 2698,38 2743,18 2768,1 2796,0';

const AltitudeChart = () => (
  <ChartSvg viewBox="0 0 2796 600" role="img" aria-label="고도 프로필">
    <defs>
      <linearGradient id="altitudeFill" x1="0" y1="0" x2="0" y2="600" gradientUnits="userSpaceOnUse">
        <stop offset="0" stopColor={ACCENT} stopOpacity="0.48" />
        <stop offset="1" stopColor={ACCENT} stopOpacity="0.01" />
      </linearGradient>
    </defs>
    <path
      d="M0 0 H2796 M0 300 H2796 M0 600 H2796 M0 0 V520 M932 0 V600 M1864 0 V600 M2796 0 V600"
      stroke="#d3d3de"
      strokeWidth="5"
      strokeDasharray="18 21.400"
    />
    <polygon points={`63,600 ${altitude} 2796,600`} fill="url(#altitudeFill)" />
    <polyline points={altitude} fill="none" stroke={ACCENT} strokeWidth="16" strokeLinejoin="round" />
    <circle cx="0" cy="582" r="32" fill={INK} />
  </ChartSvg>
);

/* ---------- page ---------- */

const StatusIcons = () => (
  <StatusGroup $gap={7}>
    <svg width="222" height="36" viewBox="707 51 222 36" fill="none" stroke="currentColor" aria-hidden="true">
      <path d="M721.500 84 C714 73 711.500 69 711.500 64.500 a10 10 0 0 1 20 0 C731.500 69 729 73 721.500 84z" strokeWidth="3" />
      <circle cx="721.500" cy="64.500" r="4.500" fill="currentColor" stroke="none" />
      <path
        d="M760 58 H787 V60 H760z M761 63 H785 Q788 63 788 66 V79 Q788 82 785 82 H762 Q759 82 759 79 V65 Q759 63 761 63z"
        fill="currentColor"
        stroke="none"
      />
      <text x="773.500" y="77" textAnchor="middle" fontSize="12" fontWeight="900" fill={LAND} stroke="none">
        NFC
      </text>
      <circle cx="820.500" cy="71.500" r="11" strokeWidth="2.500" />
      <path d="M820.500 65 V72.500 H827 M809 61 L816 56.500 M832 61 L825 56.500" strokeWidth="3" />
      <path d="M850.500 62 Q868.500 47 887 62 M856 69 Q868.500 58 881 69" strokeWidth="3" opacity="0.5" />
      <path d="M861.500 75 Q869 68 877 75" strokeWidth="3" />
      <circle cx="868.500" cy="83.500" r="2.500" fill="currentColor" stroke="none" />
      <path d="M877.500 79 L881.500 75 L885.500 79z M877.500 81 L881.500 86 L885.500 81z" fill="currentColor" stroke="none" />
      <text x="894" y="64" fontSize="14" fontWeight="700" fill="currentColor" stroke="none">
        R
      </text>
      <path d="M897 85.500 V80 M903 85.500 V75 M908.500 85.500 V70 M914 85.500 V65 M919.500 85.500 V60 M925 85.500 V54" strokeWidth="4" />
    </svg>
    <StatusGroup $gap={12}>
      <span>89%</span>
      <svg width="22" height="34" viewBox="0 0 22 34" fill="currentColor" aria-hidden="true">
        <path d="M6 0 h10 v3 h-10z" opacity="0.5" />
        <path d="M0 3 H22 V32 Q22 34 20 34 H2 Q0 34 0 32z" />
      </svg>
    </StatusGroup>
  </StatusGroup>
);

const modesAfter = [
  { label: '자전거', Icon: BikeIcon },
  { label: '지하철', Icon: MetroIcon },
  { label: '택시', Icon: TaxiIcon },
];

const navItems = [
  { label: '뒤로', d: 'M38 4 Q43 1 43 7 V41 Q43 47 38 44 L6 28 Q0 24 6 20z' },
  { label: '홈', d: 'M24 2 a22 22 0 1 0 .1 0z' },
  { label: '최근 앱', d: 'M6 2 H42 Q46 2 46 6 V42 Q46 46 42 46 H6 Q2 46 2 42 V6 Q2 2 6 2z' },
];

const App = () => (
  <Screen>
    <GlobalStyle />
    <MapArea>
      <RouteMap />
      <StatusBar>
        <StatusGroup $gap={55}>
          <span>6:14</span>
          <AppBadge viewBox="0 0 39 39" aria-hidden="true">
            <path d="M7 28 L13.500 17 L18 25" fill="none" stroke="#ffa63d" strokeWidth="2.500" />
            <circle cx="21.500" cy="14.500" r="2.800" fill="none" stroke="#ffa63d" strokeWidth="1.600" />
            <text x="20" y="28" fontSize="11" fontWeight="700" fill="#fff">PT</text>
          </AppBadge>
        </StatusGroup>
        <StatusIcons />
      </StatusBar>
      <MapOverlay>
        <OverlayColumn $align="flex-start">
          <ScaleBar>5 km</ScaleBar>
          <RoundButton aria-label="뒤로">
            <svg width="42" height="38" viewBox="0 0 42 38" fill="none" stroke={INK} strokeWidth="7" strokeLinecap="round" strokeLinejoin="round">
              <path d="M4 19 H38 M18 4 L4 19 L18 34" />
            </svg>
          </RoundButton>
        </OverlayColumn>
        <OverlayColumn $align="flex-end">
          <Controls>
            <WeatherPill>
              <WeatherIcon />
              17°
            </WeatherPill>
            <ZoomControl>
              <ZoomButton aria-label="확대">
                <PlusIcon size={50} stroke={7} />
              </ZoomButton>
              <ZoomButton aria-label="축소">
                <MinusIcon />
              </ZoomButton>
            </ZoomControl>
          </Controls>
          <RoundButton $outlined aria-label="내 위치">
            <svg width="56" height="56" viewBox="0 0 56 56" fill="none" stroke={ACCENT} strokeWidth="6" strokeLinejoin="round">
              <path d="M52 4 L3 25 L24 33 L31 53z" />
            </svg>
          </RoundButton>
        </OverlayColumn>
      </MapOverlay>
    </MapArea>

    <Sheet>
      <Handle />
      <Title>경로</Title>
      <ModeRow>
        <ModeButton aria-label="자동차">
          <CarIcon />
        </ModeButton>
        <ActiveMode aria-pressed="true">
          <WalkIcon />
          <ModeText>
            <Duration>4 t 38 min</Duration>
            <Distance>21 km</Distance>
          </ModeText>
        </ActiveMode>
        {modesAfter.map(({ label, Icon }) => (
          <ModeButton key={label} aria-label={label}>
            <Icon />
          </ModeButton>
        ))}
      </ModeRow>

      <Card $padding="0 42px 0 52px">
        <Waypoint>
          <svg width="42" height="42" viewBox="0 0 42 42" aria-hidden="true">
            <path d="M39 3 L3 16 L20.500 21 L25.500 39z" fill={ACCENT} stroke={ACCENT} strokeWidth="6" strokeLinejoin="round" />
          </svg>
          <WaypointBody $divided>
            <WaypointName>내 위치</WaypointName>
            <RowAction $filled aria-label="출발지와 도착지 바꾸기">
              <SwapIcon />
            </RowAction>
          </WaypointBody>
        </Waypoint>
        <Waypoint>
          <DestinationFlag />
          <WaypointBody>
            <WaypointName $strong>Via Aetcal Hotel &amp; Wellness</WaypointName>
            <RowAction aria-label="경유지 추가">
              <PlusIcon size={35} stroke={5} />
            </RowAction>
          </WaypointBody>
        </Waypoint>
      </Card>

      <Card $padding="32px">
        <ProfileHeader>
          <ProfileTitle>고도 프로필</ProfileTitle>
          <Stats>
            <Stat>
              <AltitudeArrow down />6 m
            </Stat>
            <Stat>
              <AltitudeArrow />
              280 m
            </Stat>
          </Stats>
        </ProfileHeader>
        <ChartBox>
          <AltitudeChart />
          <ChartLabels>
            <ChartLabel>280</ChartLabel>
            <ChartLabel>6</ChartLabel>
          </ChartLabels>
        </ChartBox>
      </Card>

      <StartButton>시작</StartButton>
    </Sheet>

    <NavBar>
      <NavButton $end aria-label="메뉴">
        <svg width="16" height="16" viewBox="0 0 16 16">
          <rect width="16" height="16" rx="2" fill="#9b9aa0" />
        </svg>
      </NavButton>
      {navItems.map(({ label, d }) => (
        <NavButton key={label} aria-label={label}>
          <svg width="48" height="48" viewBox="0 0 48 48" fill="none" stroke="#9b9aa0" strokeWidth="3.500">
            <path d={d} />
          </svg>
        </NavButton>
      ))}
    </NavBar>
  </Screen>
);

export default App;
